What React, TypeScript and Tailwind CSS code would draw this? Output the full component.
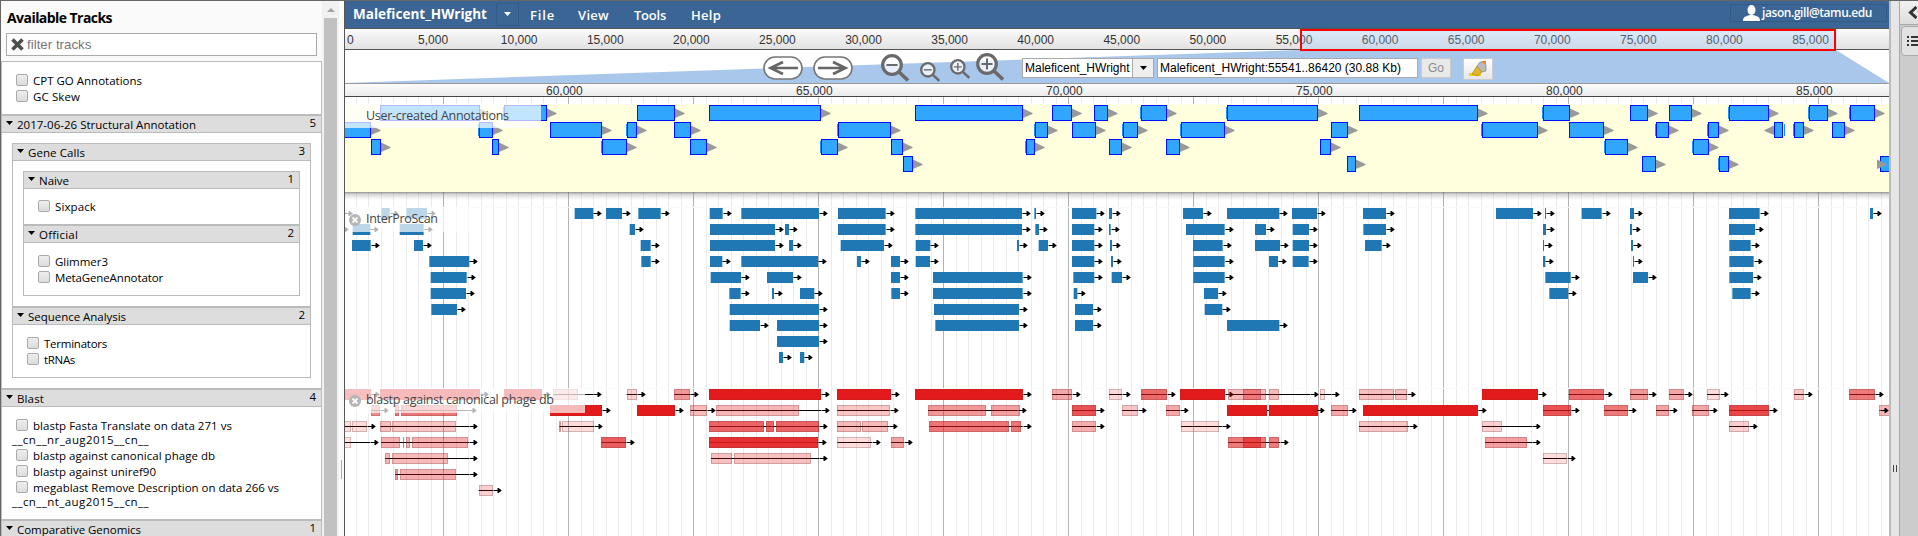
import React from "react";

type Span = [row: number, x1: number, x2: number, kind?: string];
type Hit = { row: number; segs: [number, number, number][]; end?: number };

/* Feature coordinates are stored in thirds of a pixel, per panel block. */
const BLOCKS = [340, 740, 1140, 1518];

const GENES: Span[][] = [
  [[0,121,419],[0,492,620,"s"],[0,892,1004],[0,1108,1443],[1,0,92],[1,418,458,"s"],[1,631,785],[1,862,890,"s"],[1,1003,1052],[2,94,122],[2,457,476],[2,787,860,"s"],[2,1051,1100]],
  [[0,526,848],[0,937,995],[0,1062,1103],[1,294,452,"s"],[1,886,923,"s"],[1,997,1067],[1,1150,1193,"s"],[2,243,294,"s"],[2,454,488],[2,858,884,"s"],[2,1108,1145],[3,490,518]],
  [[0,4,80,"s"],[0,262,533,"s"],[0,658,1013],[1,123,254,"s"],[1,574,623],[1,1027,1193,"s"],[2,79,119],[2,541,572],[3,622,647]],
  [[0,75,155,"s"],[0,337,389],[0,454,521],[0,633,752,"s"],[0,874,929,"s"],[0,997,1070,"s"],[1,154,257],[1,415,452,"s"],[1,571,602,"s"],[1,769,795,"r"],[1,829,857,"s"],[1,943,980],[2,261,329,"s"],[2,526,572,"s"],[3,373,413],[3,603,632,"s"],[3,1086,1130,"e"]],
];

const DOMAINS: Span[][] = [
  [[0,-20,12],[1,-20,0],[0,124,149],[0,199,261],[0,704,760],[0,798,846],[0,895,962],[0,1109,1148],[1,38,91],[1,179,251],[1,869,885],[1,1110,1305],[2,36,92],[2,222,249],[2,902,932],[2,1110,1305],[3,268,388],[3,904,932],[3,1110,1147],[4,272,380],[4,1112,1203],[5,272,378],[5,1168,1202],[6,274,351],[6,1169,1437],[7,1169,1260]],
  [[0,4,237],[0,294,437],[0,526,846],[0,883,888],[0,996,1069],[0,1107,1116],[1,135,147],[1,294,437],[1,526,846],[1,886,897],[1,996,1063],[1,1107,1112],[2,147,159],[2,302,432],[2,527,571],[2,831,837],[2,896,924],[2,996,1063],[2,1110,1116],[3,4,234],[3,351,363],[3,453,480],[3,527,570],[3,996,1063],[3,1113,1119],[4,81,159],[4,453,480],[4,579,848],[4,1000,1063],[4,1115,1146],[5,96,102],[5,180,223],[5,454,480],[5,579,848],[5,1001,1012],[6,582,837],[6,1005,1059],[7,111,237],[7,586,837],[7,1005,1059],[8,111,237],[9,117,129],[9,180,193]],
  [[0,129,189],[0,261,418],[0,456,531],[0,669,738],[0,1068,1179],[1,138,254],[1,345,378],[1,458,507],[1,670,738],[2,159,248],[2,345,420],[2,458,507],[2,675,725],[3,160,254],[3,387,414],[3,458,506],[4,160,254],[5,192,234],[6,194,247],[7,261,418]],
  [[0,81,84],[0,191,251],[0,336,348],[0,633,725],[0,1056,1065],[1,75,84],[1,336,342],[1,633,711],[2,75,78],[2,339,345],[2,634,698],[3,75,82],[3,345,348],[3,634,707],[4,82,158],[4,345,390],[4,634,705],[5,94,150],[5,643,698]],
];

const h = (row: number, segs: [number, number, number][], end?: number): Hit => ({ row, segs, end });

const HITS: Hit[][] = [
  [h(0,[[0,92,.93]]),h(0,[[121,419,1]]),h(0,[[491,605,1]]),h(0,[[640,713,.3]],760),h(0,[[860,891,.2]]),h(0,[[1003,1051,.45]]),h(0,[[1108,1443,1]]),
   h(1,[[94,120,.5]]),h(1,[[165,177,.6],[183,351,.6]],385),h(1,[[630,785,1]]),h(1,[[892,1004,1]]),h(1,[[1051,1100,.3]]),h(1,[[1129,1376,.32]],1443),
   h(2,[[0,33,.15],[36,81,.15]]),h(2,[[121,153,.28],[156,348,.25]],387),h(2,[[658,662,.3],[667,762,.15]]),h(2,[[1108,1272,.68],[1278,1302,.68],[1309,1437,.68]]),
   h(3,[[0,33,.12]],90),h(3,[[123,180,.35],[188,192,.4],[197,211,.35],[216,384,.35]],387),h(3,[[784,858,.7]]),h(3,[[1108,1434,.9]]),
   h(4,[[135,150,.33],[156,324,.3]],387),h(4,[[1113,1177,.27],[1182,1412,.27]],1437),h(5,[[165,174,.45],[180,348,.35]],387),h(6,[[416,459,.2]])],
  [h(0,[[292,453,1]]),h(0,[[526,848,1]]),h(0,[[936,995,.38]]),h(0,[[1107,1146,.17]]),h(1,[[292,449,.25]]),h(1,[[564,738,.45],[753,841,.42]],834),h(1,[[996,1069,.75]]),h(1,[[1146,1194,.25]]),
   h(2,[[292,363,.3],[366,444,.3]],448),h(2,[[568,808,.6],[813,843,.6]],848),h(2,[[996,1067,.35]]),h(3,[[292,393,.15]],396),h(3,[[453,491,.4]])],
  [h(0,[[3,80,.65]]),h(0,[[121,254,1]]),h(0,[[264,377,.3],[309,363,.4],[387,417,.3]],510),h(0,[[540,554,.15]],573),h(0,[[657,762,.28],[765,801,.28]]),h(0,[[1026,1194,1]]),
   h(1,[[78,120,.38]]),h(1,[[261,381,1],[387,534,1]],528),h(1,[[573,624,.38]]),h(1,[[669,1014,1]]),h(2,[[123,237,.15]],246),h(2,[[657,804,.25]],807),h(2,[[1026,1086,.2]],1176),
   h(3,[[264,377,.58],[309,363,.6],[387,417,.58]],420),h(3,[[1035,1161,.42]],1176)],
  [h(0,[[152,258,.65]]),h(0,[[336,390,.45]]),h(0,[[453,498,.38]]),h(0,[[567,605,.15]]),h(0,[[828,858,.25]]),h(0,[[994,1071,.58]]),
   h(1,[[75,158,.75]]),h(1,[[259,330,.58]]),h(1,[[414,453,.4]]),h(1,[[522,573,.38]]),h(1,[[633,753,.8]]),h(1,[[1084,1130,.3]],1087),h(2,[[633,693,.2]]),h(4,[[75,146,.15]])],
];

function Arrow({ x, y }: { x: number; y: number }) {
  const s = Math.round(x) + 0.5;
  return (
    <g>
      <rect x={s} y={y} width={6} height={1} fill="#000" />
      <path d={`M${s + 4} ${y - 2}h1L${s + 8.3} ${y + 0.5}L${s + 5} ${y + 3}h-1Z`} fill="#000" />
    </g>
  );
}

function TrackCanvas() {
  const lines = Array.from({ length: 124 }, (_, i) => i - 7);
  return (
    <svg className="block" width="1544" height="439" viewBox="345 97 1544 439" fontFamily="'Open Sans','Noto Sans',sans-serif">
      <defs>
        <linearGradient id="shade" x1="0" y1="0" x2="0" y2="1">
          <stop offset="0" stopColor="#555" stopOpacity=".65" />
          <stop offset=".3" stopColor="#777" stopOpacity=".3" />
          <stop offset="1" stopColor="#999" stopOpacity="0" />
        </linearGradient>
      </defs>
      <rect x="345" y="97" width="1544" height="439" fill="#fff" />
      {lines.map((k) => (
        <rect key={k} x={Math.floor(443.5 + 12.5 * k)} y="97" width="1" height="439" fill={k % 10 === 0 ? "#b4b4b4" : "#ebebeb"} />
      ))}
      <rect x="345" y="104" width="1544" height="88" fill="#ffffdd" />
      <rect x="345" y="104" width="1544" height="1" fill="#fffff0" />
      <rect x="345" y="192" width="1544" height="8" fill="url(#shade)" />
      <rect x="345" y="207" width="1544" height="1" fill="#fafafa" />
      <rect x="345" y="388" width="1544" height="1" fill="#fafafa" />
      {GENES.map((block, b) =>
        block.map(([row, a, z, kind], i) => {
          const x1 = Math.floor(BLOCKS[b] + a / 3);
          const x2 = Math.ceil(BLOCKS[b] + z / 3);
          const y = 105 + row * 17;
          const ax = kind === "e" ? 1877 : x2;
          return (
            <g key={`${b}-${i}`}>
              {kind === "s" && <rect x={x1 - 1} y={y + 2} width="1" height="12" fill="#1e90ff" />}
              {kind === "r" && <rect x={x2 + 1} y={y + 2} width="1" height="12" fill="#1e90ff" />}
              <rect x={x1 + 0.5} y={y + 0.5} width={x2 - x1 - 1} height="15" fill="#31a6ff" stroke="#0011ff" />
              <path
                d={kind === "r" ? `M${x1} ${y + 3.5}v9.5l-9.5 -4v-1Z` : `M${ax} ${y + 3.5}v9.5l9.5 -4v-1Z`}
                fill="#999"
              />
            </g>
          );
        })
      )}
      {DOMAINS.map((block, b) =>
        block.map(([row, a, z], i) => {
          const x1 = BLOCKS[b] + a / 3;
          const x2 = BLOCKS[b] + z / 3;
          const y = 208 + row * 16;
          return (
            <g key={`${b}-${i}`}>
              <rect x={x1} y={y} width={x2 - x1} height="11" fill="#1f78b4" />
              <Arrow x={x2} y={y + 5} />
            </g>
          );
        })
      )}
      {HITS.map((block, b) =>
        block.map(({ row, segs, end }, i) => {
          const o = BLOCKS[b];
          const start = o + segs[0][0] / 3;
          const stop = o + (end ?? segs[segs.length - 1][1]) / 3;
          const y = 389 + row * 16;
          return (
            <g key={`${b}-${i}`}>
              <rect x={start} y={y + 5} width={stop - start} height="1" fill="#000" />
              {segs.map(([a, z, op], j) => {
                const l = Math.round(o + a / 3);
                const r = Math.round(o + z / 3);
                return (
                  <g key={j}>
                    <rect x={l} y={y} width={r - l} height="11" fill="#e31a1c" opacity={op} />
                    <rect x={l + 0.5} y={y + 0.5} width={Math.max(r - l - 1, 0.2)} height="10" fill="none" stroke="#633" strokeOpacity={op === 1 ? 0.12 : 0.25} />
                  </g>
                );
              })}
              <Arrow x={stop} y={y + 5} />
            </g>
          );
        })
      )}
      <g fill="#fff" fillOpacity=".7">
        <rect x="345" y="104" width="196" height="24" />
        <rect x="345" y="207" width="124" height="25" />
        <rect x="345" y="388" width="240" height="25" />
      </g>
      <g fill="#444" fontSize="12.5">
        <text x="366" y="120" textLength="143">User-created Annotations</text>
        <text x="366" y="223" textLength="72">InterProScan</text>
        <text x="366" y="404" textLength="188">blastp against canonical phage db</text>
      </g>
      {[220, 401].map((y) => (
        <g key={y}>
          <circle cx="355" cy={y} r="6" fill="#b5b5b5" />
          <path d={`M352.5 ${y - 2.5}l5 5m0 -5l-5 5`} stroke="#fff" strokeWidth="1.8" />
        </g>
      ))}
    </svg>
  );
}

function Label({ w, children, className = "translate-y-px" }: { w?: number; children: string; className?: string }) {
  const ref = React.useRef<HTMLSpanElement>(null);
  const [sp, setSp] = React.useState(0);
  React.useLayoutEffect(() => {
    if (w && ref.current) setSp((w - ref.current.getBoundingClientRect().width) / children.length);
  }, []);
  return (
    <span ref={ref} className={`inline-block whitespace-nowrap ${className}`} style={{ letterSpacing: sp }}>
      {children}
    </span>
  );
}

function Check({ w, children }: { w: number; children: string }) {
  return (
    <div className="flex h-4 items-center">
      <span className="mr-[5px] h-3 w-3 shrink-0 rounded-[2px] border border-[#aaa] bg-linear-to-b from-[#eee] to-[#dcdcdc]" />
      <Label w={w}>{children}</Label>
    </div>
  );
}

function Header({ w, count, first, children }: { w: number; count: number; first?: boolean; children: string }) {
  return (
    <div className={`flex items-center border-b border-[#bbb] bg-[#ddd] pl-1 pr-[5px] ${first ? "h-[17px]" : "h-[19px] border-t-2"}`}>
      <svg className="mr-1 -mt-0.5" width="7" height="4"><path d="M0 0h7L3.5 4Z" /></svg>
      <Label w={w}>{children}</Label>
      <span className="-mt-[2px] ml-auto">{count}</span>
    </div>
  );
}

function Sidebar() {
  return (
    <aside className="flex h-[535px] w-[345px] shrink-0 border-l border-r border-r-[#555] border-l-[#666] bg-white font-['Open_Sans'] text-[11.5px] leading-4 text-black">
      <div className="flex w-[321px] flex-col bg-[#fafafa]">
        <div className="h-8 pl-1.5 pt-[8px] text-sm leading-4 font-bold"><Label w={105}>Available Tracks</Label></div>
        <div className="ml-[5px] flex h-[23px] w-[311px] items-center border border-[#aaa] bg-white pl-1 font-['Liberation_Sans'] text-[13.33px] text-[#777]">
          <svg className="mr-[3px]" width="13" height="13" viewBox="0 0 13 13"><path d="M1.500 1.500l10 10m0 -10l-10 10" stroke="#4d4d4d" strokeWidth="3.600" /></svg>
          filter tracks
        </div>
        <div className="mt-[5px] h-[475px] overflow-hidden border border-b-0 border-[#bbb] bg-white">
          <div className="h-[52px] pl-[14px] pt-[10px]">
            <Check w={109}>CPT GO Annotations</Check>
            <Check w={47}>GC Skew</Check>
          </div>
          <Header w={179} count={5}>2017-06-26 Structural Annotation</Header>
          <div className="mx-[10px] mt-[10px] h-[235px] w-[299px] border border-[#bbb]">
            <Header w={57} count={3} first>Gene Calls</Header>
            <div className="mx-[10px] mt-[10px] h-[125px] w-[277px] border border-[#bbb]">
              <Header w={30} count={1} first>Naive</Header>
              <div className="h-[35px] pl-[14px] pt-[9px]"><Check w={41}>Sixpack</Check></div>
              <Header w={39} count={2}>Official</Header>
              <div className="pl-[14px] pt-[10px]">
                <Check w={53}>Glimmer3</Check>
                <Check w={108}>MetaGeneAnnotator</Check>
              </div>
            </div>
            <div className="h-[10px]" />
            <Header w={98} count={2}>Sequence Analysis</Header>
            <div className="pl-[14px] pt-[10px]">
              <Check w={63}>Terminators</Check>
              <Check w={31}>tRNAs</Check>
            </div>
          </div>
          <div className="h-[10px]" />
          <Header w={27} count={4}>Blast</Header>
          <div className="h-[112px] pl-[10px] pt-[10px]">
            <div className="pl-1"><Check w={199}>blastp Fasta Translate on data 271 vs</Check></div>
            <div className="h-[14px] leading-[14px]"><Label w={137} className="">__cn__nr_aug2015__cn__</Label></div>
            <div className="pl-1">
              <Check w={182}>blastp against canonical phage db</Check>
              <Check w={123}>blastp against uniref90</Check>
              <Check w={246}>megablast Remove Description on data 266 vs</Check>
            </div>
            <div className="h-[14px] leading-[14px]"><Label w={137} className="">__cn__nt_aug2015__cn__</Label></div>
          </div>
          <Header w={124} count={1}>Comparative Genomics</Header>
        </div>
      </div>
      <div className="flex w-[17px] flex-col items-center bg-[#f1f1f1]">
        <svg className="mt-[7px]" width="8" height="4"><path d="M0 4h8L4 0Z" fill="#a3a3a3" /></svg>
        <div className="mt-[6px] w-[13px] grow bg-[#c1c1c1]" />
      </div>
      <div className="flex w-[5px] items-end bg-[#fafafa] pb-[57px] pl-[2px]"><div className="h-[19px] w-px bg-[#aaa]" /></div>
    </aside>
  );
}

function Magnifier({ size, plus }: { size: number; plus?: boolean }) {
  return (
    <svg width={size} height={size} viewBox="0 0 28 28" fill="none" stroke="#6a6a6a">
      <path d="M18 18L27 26.5" strokeWidth="3.6" />
      <circle cx="11" cy="11" r="9.3" fill="#fff" fillOpacity=".75" strokeWidth="3.2" />
      <path d={plus ? "M5.5 11h11M11 5.5v11" : "M5.5 11h11"} strokeWidth="2" />
    </svg>
  );
}

function Pan({ flip }: { flip?: boolean }) {
  return (
    <svg width="40" height="24" viewBox="0 0 40 24" className={flip ? "-scale-x-100" : ""}>
      <rect x="1" y="1" width="38" height="22" rx="11" fill="#fff" stroke="#777" strokeWidth="1.6" />
      <path d="M8 12h27M20 6L7.500 12l12.500 6" fill="none" stroke="#666" strokeWidth="2.6" />
    </svg>
  );
}

const OVERVIEW = ["5,000","10,000","15,000","20,000","25,000","30,000","35,000","40,000","45,000","50,000","55,000","60,000","65,000","70,000","75,000","80,000","85,000"];
const DETAIL = ["60,000","65,000","70,000","75,000","80,000","85,000"];

export default function App() {
  return (
    <div className="flex h-[536px] w-[1918px] overflow-hidden border-t border-[#666] bg-white font-['Liberation_Sans'] text-xs text-black">
      <Sidebar />
      <main className="relative flex w-[1544px] shrink-0 flex-col">
        <nav className="flex h-7 shrink-0 items-center border-b border-[#555] bg-[#3a6595] font-['Open_Sans'] text-white">
          <div className="-mt-[3px] ml-2 w-[143px] text-[13.5px] font-bold"><Label w={134}>Maleficent_HWright</Label></div>
          <div className="-mt-px flex h-[23px] w-[23px] items-center justify-center border border-[#345a87]">
            <svg width="7" height="4"><path d="M0 0h7L3.5 4Z" fill="#fff" /></svg>
          </div>
          <div className="ml-[11px] flex text-[13px] font-semibold">
            <span className="w-12"><Label w={25}>File</Label></span>
            <span className="w-14"><Label w={31}>View</Label></span>
            <span className="w-[57px]"><Label w={32}>Tools</Label></span>
            <Label w={30}>Help</Label>
          </div>
          <div className="-mt-[3px] mr-[2px] ml-auto flex h-[18px] w-[157px] items-center border border-[#345a87] pl-3 text-xs font-semibold">
            <svg className="mr-[2px]" width="17" height="16" viewBox="0 0 17 16" fill="#fff"><ellipse cx="8.5" cy="5" rx="4" ry="5" /><path d="M0 16c0-4 2-4.500 7-6h3c5 1.500 7 2 7 6Z" /></svg>
            <Label w={110} className="">jason.gill@tamu.edu</Label>
          </div>
        </nav>
        <div className="flex h-[21px] shrink-0 items-center border-b border-[#555] bg-linear-to-b from-[#fafafa] to-[#e2e2e2] pl-0.5 pt-0.5 text-[#333]">
          <span className="w-[43px]">0</span>
          {OVERVIEW.map((t) => (
            <span key={t} className="w-[86.1px] shrink-0 text-center">{t}</span>
          ))}
        </div>
        <div className="absolute top-7 left-[955px] h-[22px] w-[536px] border-2 border-[#f00] bg-[#9cc8f8]/30" />
        <div className="flex h-[34px] shrink-0 border-b border-[#999]">
          <svg className="block shrink-0" width="1544" height="33" viewBox="0 0 1544 33"><path d="M0 33L955 0H1491L1544 33Z" fill="#a9c6eb" /></svg>
          <div className="-ml-[1544px] flex h-[33px] w-[1544px] items-center pt-[3px] pl-[418px]">
            <div className="flex gap-[10px]"><Pan /><Pan flip /></div>
            <div className="ml-7 flex items-center">
              <Magnifier size={28} />
              <span className="ml-[11px] mt-[7px]"><Magnifier size={20} /></span>
              <span className="ml-[10px] mt-px"><Magnifier size={20} plus /></span>
              <span className="ml-[6px] -mt-[3px]"><Magnifier size={28} plus /></span>
            </div>
            <div className="ml-[18px] flex h-5 w-[132px] items-center border border-[#aaa] bg-white pl-[2px]">
              <span className="w-[107px]">Maleficent_HWright</span>
              <span className="flex h-[18px] grow items-center justify-center border-l border-[#aaa] bg-[#eee]">
                <svg width="7" height="4"><path d="M0 0h7L3.5 4Z" /></svg>
              </span>
            </div>
            <div className="ml-[3px] flex h-5 w-[261px] items-center border border-[#aaa] bg-white pl-[2px]"><Label w={241} className="">Maleficent_HWright:55541..86420 (30.88 Kb)</Label></div>
            <div className="ml-[3px] flex h-5 w-[30px] items-center justify-center border border-[#ccc] bg-[#e9e9e9] text-[#8a8a8a]">Go</div>
            <div className="mt-[2px] ml-3 flex h-[22px] w-[30px] items-center justify-center border border-[#ccc] bg-linear-to-b from-white to-[#e6e6e6]">
              <svg width="18" height="17" viewBox="0 0 18 17">
                <path d="M0 12h12v3H0Z" fill="#ecd21c" />
                <path d="M3 13L8 5l5 6-4 4Z" fill="#e3b32a" stroke="#b98617" strokeWidth=".7" />
                <path d="M8 5l3-4h4l2 3v6l-4 1Z" fill="#bbb" stroke="#888" strokeWidth=".7" />
                <path d="M12 0h5v4Z" fill="#f2832a" />
              </svg>
            </div>
          </div>
        </div>
        <div className="flex h-[13px] shrink-0 items-center border-b border-[#444] bg-linear-to-b from-[#fcfcfc] to-[#ececec] pt-px pl-[94px] leading-3 text-[#333]">
          <div className="flex pl-[107px]">
            {DETAIL.map((t) => (
              <span key={t} className="w-[250px] shrink-0">{t}</span>
            ))}
          </div>
        </div>
        <TrackCanvas />
      </main>
      <div className="flex w-[11px] shrink-0 items-end border-l-2 border-r border-l-[#bbb] border-r-[#aaa] bg-[#e6e6e6] pb-[64px] pl-[2px]">
        <div className="h-[7px] w-1 border-x border-[#444]" />
      </div>
      <div className="-mt-px w-[18px] shrink-0 overflow-hidden bg-[#ccc]">
        <div className="flex h-[25px] items-center border-b border-[#aaa] bg-linear-to-b from-[#f2f2f2] to-[#ddd] pl-[8px]">
          <svg width="9" height="13" fill="none" stroke="#333" strokeWidth="3"><path d="M8.500 1L2.500 6.500L8.500 12" /></svg>
        </div>
        <div className="mt-px ml-[1px] flex h-[30px] w-8 items-center rounded-sm border border-[#aaa] bg-[#e2e2e2] pl-[5px]">
          <svg className="shrink-0" width="16" height="10" fill="#333"><path d="M0 0h2v2H0ZM0 4h2v2H0ZM0 8h2v2H0ZM4 0h12v2H4ZM4 4h12v2H4ZM4 8h12v2H4Z" /></svg>
        </div>
      </div>
    </div>
  );
}
